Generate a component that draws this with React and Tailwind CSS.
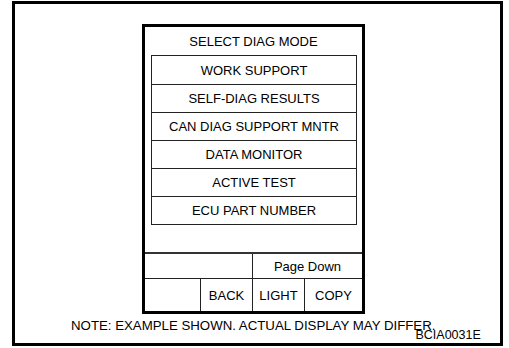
const items = [
  "WORK SUPPORT",
  "SELF-DIAG RESULTS",
  "CAN DIAG SUPPORT MNTR",
  "DATA MONITOR",
  "ACTIVE TEST",
  "ECU PART NUMBER",
];

export default function App() {
  return (
    <div
      className="w-[509px] h-[348px] bg-white overflow-hidden text-black"
      style={{ fontFamily: '"Liberation Sans", Arial, sans-serif' }}
    >
      {/* outer frame */}
      <div className="ml-[12px] mt-[1px] w-[491px] h-[345px] border-[3px] border-black flex flex-col">
        {/* diag panel */}
        <div className="ml-[127px] mt-[20px] w-[223px] h-[290px] border-[3px] border-black flex flex-col">
          <div className="h-[28px] flex items-center justify-center text-[13px] leading-none">
            SELECT DIAG MODE
          </div>
          <div className="ml-[6px] w-[206px] border border-[#222] flex flex-col">
            {items.map((label, i) => (
              <div
                key={label}
                className={`h-[28px] flex items-center justify-center text-[13px] leading-none ${
                  i > 0 ? "border-t border-[#222]" : ""
                }`}
              >
                {label}
              </div>
            ))}
          </div>
          <div className="flex-1" />
          <div className="border-t-2 border-[#333] h-[26px] flex">
            <div className="w-[108px] border-r border-[#222]" />
            <div className="flex-1 flex items-center justify-center text-[13px] leading-none">
              Page Down
            </div>
          </div>
          <div className="border-t border-[#222] h-[33px] flex text-[13px] leading-none">
            <div className="w-[56px] border-r border-[#222]" />
            <div className="w-[52px] border-r border-[#222] flex items-center justify-center">
              BACK
            </div>
            <div className="w-[52px] border-r border-[#222] flex items-center justify-center">
              LIGHT
            </div>
            <div className="flex-1 flex items-center justify-center">COPY</div>
          </div>
        </div>

        {/* note */}
        <div className="flex items-start mt-[5px] ml-[56px]">
          <span className="text-[13.25px] leading-none whitespace-nowrap">
            NOTE: EXAMPLE SHOWN. ACTUAL DISPLAY MAY DIFFER.
          </span>
          <span className="text-[12.5px] leading-none -ml-[20px] mt-[10px] whitespace-nowrap">
            BCIA0031E
          </span>
        </div>
      </div>
    </div>
  );
}
